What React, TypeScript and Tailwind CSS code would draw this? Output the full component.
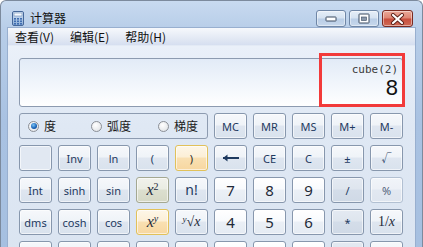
import type { ReactNode } from "react";

const sans = "font-['Noto_Sans','Noto_Sans_CJK_SC',sans-serif]";
const cjk = "font-['Noto_Sans_CJK_SC','Noto_Sans',sans-serif]";
const serif = "font-['Liberation_Serif',serif] italic";

const variants: Record<string, string> = {
  fn: "border-[#8797ad] bg-[linear-gradient(to_bottom,#f6f8fb_0%,#eff3f8_46%,#dfe6f0_50%,#d9e2ed_100%)] text-[#1e3a5f]",
  num: "border-[#8797ad] bg-[linear-gradient(to_bottom,#ffffff_0%,#f8fafd_46%,#ebf0f6_50%,#e5ebf3_100%)] text-[#1f2a38]",
  op: "border-[#8797ad] bg-[linear-gradient(to_bottom,#e4eaf2_0%,#dee5ee_46%,#d4dde9_50%,#cfd9e6_100%)] text-[#1e3a5f]",
  hot: "border-[#e1c15a] bg-[linear-gradient(to_bottom,#fdf6e8_0%,#fcefd6_46%,#f9e0b2_50%,#f7d7a0_100%)] text-[#2a2a2a]",
  olive: "border-[#a4a892] bg-[linear-gradient(to_bottom,#f1f2ec_0%,#eaece2_46%,#dcdfcf_50%,#d5d8c5_100%)] text-[#2a2a2a]",
  dim: "border-[#b2c0d2] bg-[linear-gradient(to_bottom,#f1f4f9_0%,#ecf0f6_46%,#e2e8f1_50%,#dee5ef_100%)] text-[#51627a]",
  blank: "border-[#8797ad] bg-[#e1e8f2]",
};

function Key({ children, v = "fn", className = "" }: { children?: ReactNode; v?: string; className?: string }) {
  return (
    <div
      className={`flex items-center justify-center rounded-[3px] border shadow-[inset_0_0_0_1px_rgba(255,255,255,0.6)] ${variants[v]} ${className}`}
    >
      {children}
    </div>
  );
}

function Radio({ checked, label }: { checked?: boolean; label: string }) {
  return (
    <div className="flex items-center gap-[5px]">
      <div className="flex h-[11px] w-[11px] items-center justify-center rounded-full border border-[#8b8f96] bg-[radial-gradient(circle_at_40%_35%,#ffffff,#dcdfe3)]">
        {checked && (
          <div className="h-[6px] w-[6px] rounded-full bg-[radial-gradient(circle_at_40%_35%,#7cc4f5,#1660b5_60%,#0b3b78)]" />
        )}
      </div>
      <span className={`${cjk} text-[12px] leading-[14px] text-[#1b1b1b]`}>{label}</span>
    </div>
  );
}

function CalcIcon() {
  return (
    <svg width="12" height="15" viewBox="0 0 12 15">
      <defs>
        <linearGradient id="cb" x1="0" y1="0" x2="0" y2="1">
          <stop offset="0" stopColor="#dbe8f7" />
          <stop offset="1" stopColor="#8badd6" />
        </linearGradient>
      </defs>
      <rect x="0.5" y="0.5" width="11" height="14" rx="1.5" fill="url(#cb)" stroke="#46689a" />
      <rect x="2" y="2" width="8" height="3" fill="#f7fbff" stroke="#6b8ab4" strokeWidth="0.6" />
      {[0, 1, 2].map((r) =>
        [0, 1, 2].map((c) => (
          <rect key={`${r}-${c}`} x={2 + c * 3} y={7 + r * 2.5} width="2" height="1.6" fill="#3f6db0" />
        ))
      )}
    </svg>
  );
}

function CapButton({ kind }: { kind: "min" | "max" | "close" }) {
  const red = kind === "close";
  return (
    <div
      className={`flex h-[17px] items-center justify-center rounded-[3px] border shadow-[inset_0_0_0_1px_rgba(255,255,255,0.45)] ${
        red
          ? "w-[31px] border-[#7a2a22] bg-[linear-gradient(to_bottom,#eaa898_0%,#de8472_48%,#c84d3d_52%,#cf6b55_100%)]"
          : "w-[30px] border-[#6f86a6] bg-[linear-gradient(to_bottom,#e6eef8_0%,#d5e2f1_48%,#b9cde6_52%,#c7d8ec_100%)]"
      }`}
    >
      {kind === "min" && (
        <svg width="12" height="6" viewBox="0 0 12 6">
          <rect x="1" y="1" width="10" height="4" rx="0.5" fill="#fff" stroke="#3a4a60" />
        </svg>
      )}
      {kind === "max" && (
        <svg width="12" height="11" viewBox="0 0 12 11">
          <rect x="1" y="1" width="10" height="9" rx="0.5" fill="#fff" stroke="#3a4a60" />
          <rect x="3.5" y="4" width="5" height="3.5" fill="#8a98ab" stroke="#3a4a60" strokeWidth="0.6" />
        </svg>
      )}
      {kind === "close" && (
        <svg width="15" height="12" viewBox="0 0 15 12">
          <path d="M3 2 L12 10 M12 2 L3 10" stroke="#5a1f18" strokeWidth="4" strokeLinecap="round" />
          <path d="M3 2 L12 10 M12 2 L3 10" stroke="#ffffff" strokeWidth="2.2" strokeLinecap="round" />
        </svg>
      )}
    </div>
  );
}

function BackArrow() {
  return (
    <svg width="18" height="8" viewBox="0 0 18 8">
      <path d="M1 4 H17" stroke="#1e3a5f" strokeWidth="2" />
      <path d="M1 4 L5.5 0.5 V7.5 Z" fill="#1e3a5f" />
    </svg>
  );
}

export default function App() {
  const t = `${sans} text-[11px] leading-none`;
  const d = `${sans} text-[15px] leading-none`;
  return (
    <div className="relative h-[247px] w-[423px] overflow-hidden bg-white">
      {/* window frame */}
      <div className="flex h-[280px] w-[423px] flex-col rounded-t-[6px] border border-b-0 border-[#7c8a9d] bg-[linear-gradient(to_bottom,#c8daf0_0px,#b7cde8_29px,#a9c2e2_120px,#a5bfe0_280px)] px-[6px]">
        {/* title bar */}
        <div className="flex h-[28px] items-start">
          <div className="ml-[5px] mt-[10px]">
            <CalcIcon />
          </div>
          <span className={`${cjk} ml-[6px] mt-[10px] text-[12px] leading-[14px] text-[#111]`}>计算器</span>
          <div className="ml-auto mr-[3px] mt-[9px] flex gap-[3px]">
            <CapButton kind="min" />
            <CapButton kind="max" />
            <CapButton kind="close" />
          </div>
        </div>

        <div className="flex flex-1 flex-col border-x border-t border-[#98afcf]">
          {/* menu bar */}
          <div className="flex h-[18px] items-center gap-[16px] border-b border-[#e3eaf5] bg-[linear-gradient(to_bottom,#f6f8fc,#e3e9f4_60%,#d6dff0)] pl-[7px]">
            <span className={`${cjk} text-[12px] leading-[14px] text-[#111]`}>查看(V)</span>
            <span className={`${cjk} text-[12px] leading-[14px] text-[#111]`}>编辑(E)</span>
            <span className={`${cjk} text-[12px] leading-[14px] text-[#111]`}>帮助(H)</span>
          </div>

          {/* client area */}
          <div className="flex-1 bg-[linear-gradient(to_bottom,#eaf0f9,#dfe8f4_80px,#d9e3f0)] pl-[11px] pt-[12px]">
            {/* display */}
            <div className="flex h-[49px] w-[384px] flex-col items-end rounded-[3px] border border-[#8d9bb0] bg-[linear-gradient(to_bottom,#e2ebf7,#f3f7fc_60%,#ffffff)] pr-[4px]">
              <span className="mt-[5px] font-['DejaVu_Sans_Mono',monospace] text-[11px] leading-[12px] text-[#3a3a3a]">
                cube(2)
              </span>
              <span className="font-['Liberation_Sans',sans-serif] text-[22px] leading-[24px] text-[#111]">8</span>
            </div>

            {/* keypad */}
            <div className="mt-[6px] grid grid-cols-[repeat(10,33px)] auto-rows-[26px] gap-[6px]">
              <div className="col-span-5 flex items-center rounded-[3px] border border-[#8d9bb0] pl-[8px]">
                <div className="w-[63px]">
                  <Radio checked label="度" />
                </div>
                <div className="w-[67px]">
                  <Radio label="弧度" />
                </div>
                <Radio label="梯度" />
              </div>
              <Key><span className={t}>MC</span></Key>
              <Key><span className={t}>MR</span></Key>
              <Key><span className={t}>MS</span></Key>
              <Key><span className={t}>M+</span></Key>
              <Key><span className={t}>M-</span></Key>

              <Key v="blank" />
              <Key><span className={t}>Inv</span></Key>
              <Key><span className={t}>ln</span></Key>
              <Key><span className={t}>(</span></Key>
              <Key v="hot"><span className={t}>)</span></Key>
              <Key><BackArrow /></Key>
              <Key><span className={t}>CE</span></Key>
              <Key><span className={t}>C</span></Key>
              <Key><span className={t}>±</span></Key>
              <Key><span className={`${sans} text-[10px] leading-none`}>√</span></Key>

              <Key><span className={t}>Int</span></Key>
              <Key><span className={t}>sinh</span></Key>
              <Key><span className={t}>sin</span></Key>
              <Key v="olive">
                <span className={`${serif} text-[16px] leading-none text-[#1e2a3a]`}>
                  x<sup className="not-italic text-[10px]">2</sup>
                </span>
              </Key>
              <Key><span className={`${sans} text-[14px] leading-none`}>n!</span></Key>
              <Key v="num"><span className={d}>7</span></Key>
              <Key v="num"><span className={d}>8</span></Key>
              <Key v="num"><span className={d}>9</span></Key>
              <Key v="op"><span className={t}>/</span></Key>
              <Key v="dim"><span className={t}>%</span></Key>

              <Key><span className={t}>dms</span></Key>
              <Key><span className={t}>cosh</span></Key>
              <Key><span className={t}>cos</span></Key>
              <Key v="hot">
                <span className={`${serif} text-[16px] leading-none text-[#1e2a3a]`}>
                  x<sup className="text-[10px]">y</sup>
                </span>
              </Key>
              <Key>
                <span className={`${serif} text-[14px] leading-none text-[#1e2a3a]`}>
                  <sup className="text-[9px]">y</sup>
                  <span className="not-italic">√</span>x
                </span>
              </Key>
              <Key v="num"><span className={d}>4</span></Key>
              <Key v="num"><span className={d}>5</span></Key>
              <Key v="num"><span className={d}>6</span></Key>
              <Key v="op"><span className={t}>*</span></Key>
              <Key>
                <span className={`font-['Liberation_Serif',serif] text-[14px] leading-none text-[#1e2a3a]`}>
                  1/<i>x</i>
                </span>
              </Key>

              {/* bottom row, only its top edge is in view */}
              <Key />
              <Key />
              <Key />
              <Key />
              <Key />
              <Key v="num" />
              <Key v="num" />
              <Key v="num" />
              <Key v="op" />
              <Key className="row-span-2" />
            </div>
          </div>
        </div>
      </div>

      {/* red highlight annotation */}
      <div className="absolute left-[319px] top-[53px] h-[54px] w-[86px] border-[3px] border-[#f23a3a]" />
    </div>
  );
}
